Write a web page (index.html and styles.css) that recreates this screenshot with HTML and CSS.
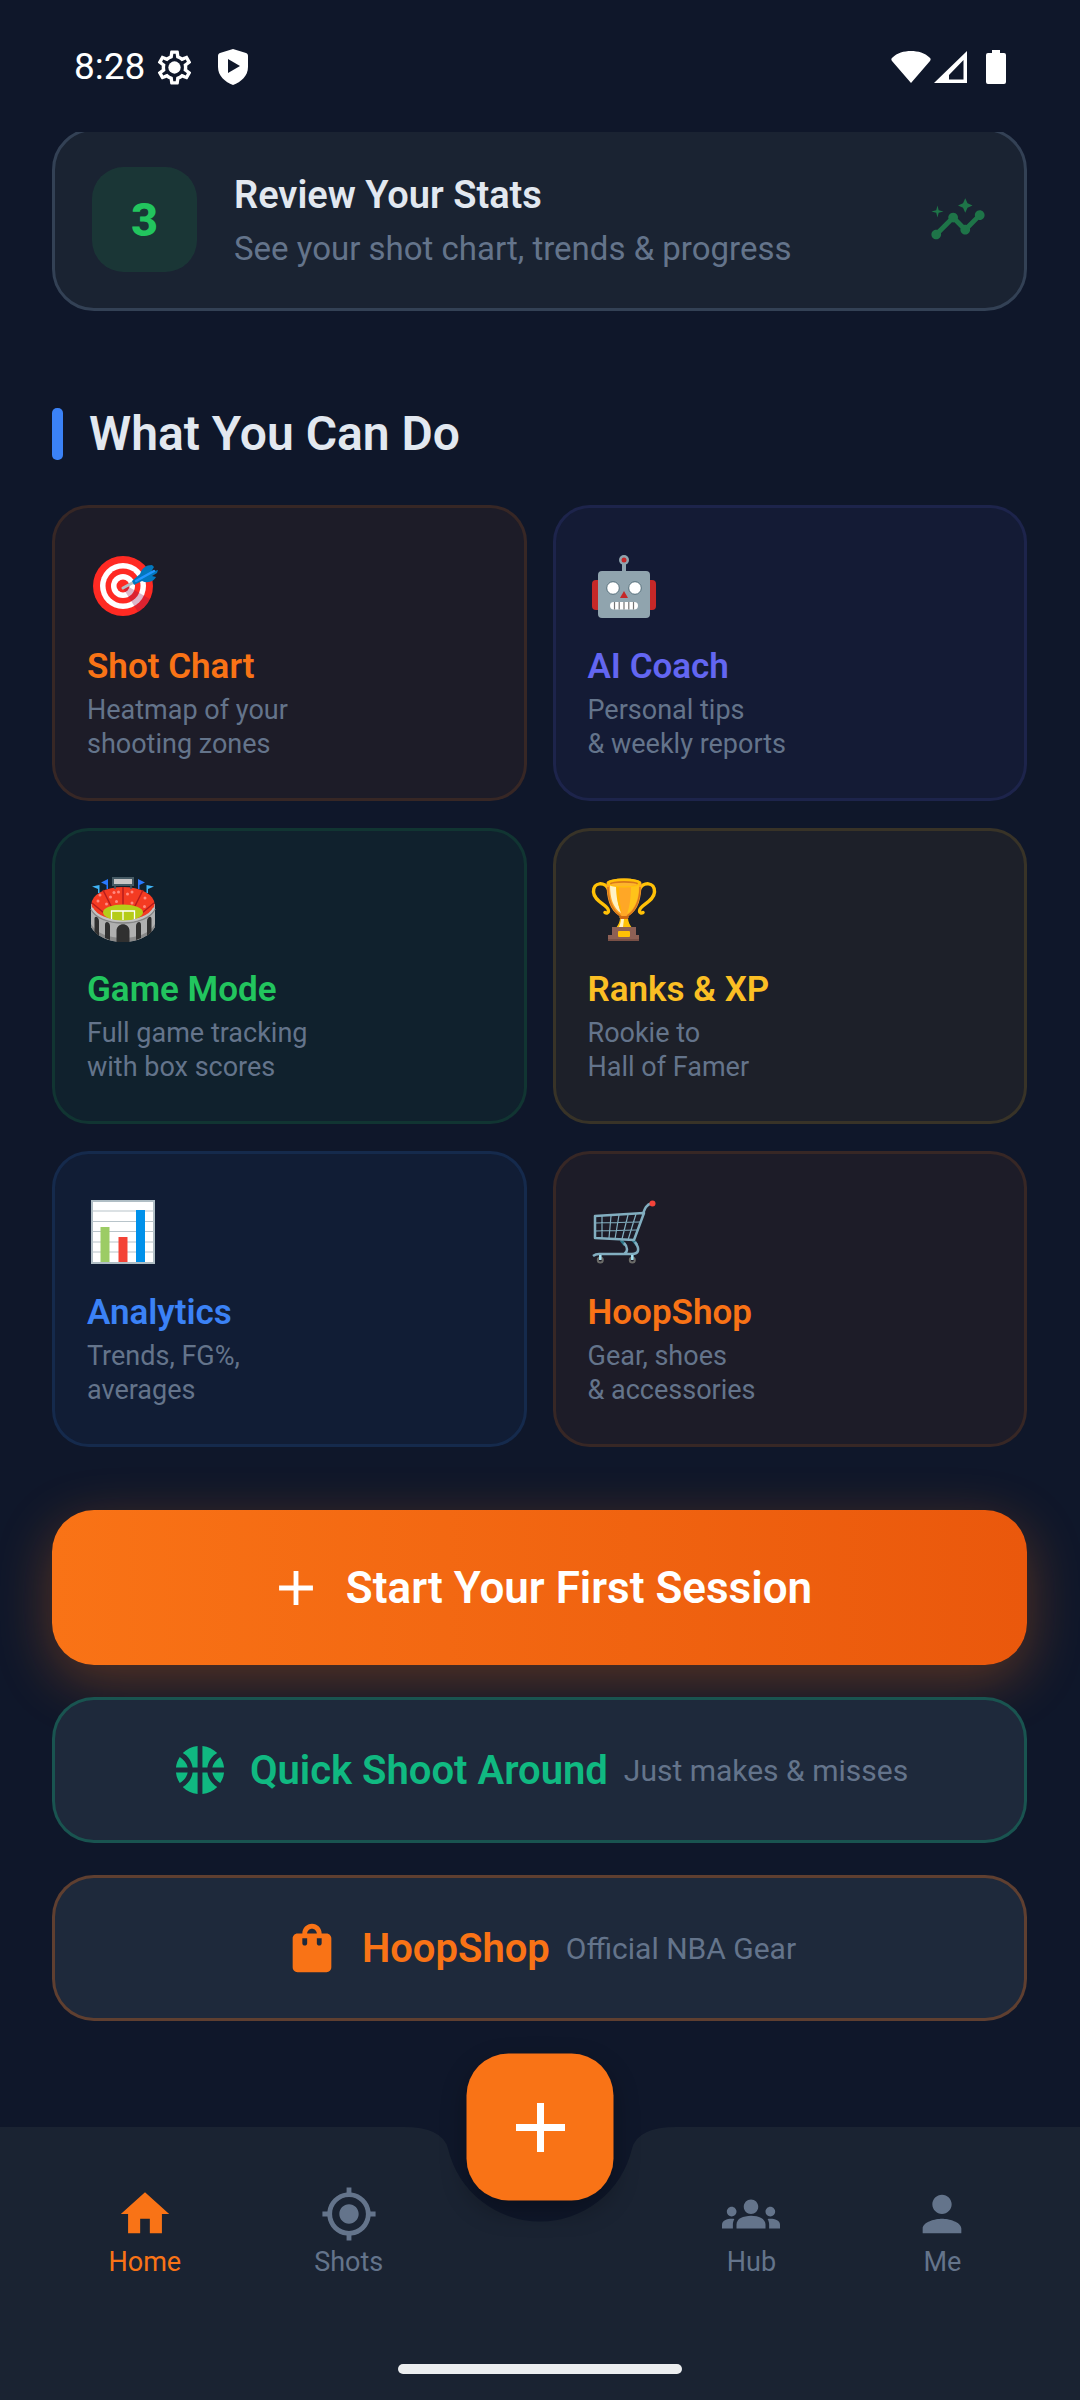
FILE: index.html
```html
<!DOCTYPE html>
<html lang="en">
<head>
  <meta charset="UTF-8">
  <meta name="viewport" content="width=device-width, initial-scale=1.0">
  <title>Home</title>
  <link rel="stylesheet" href="styles.css">
</head>
<body>
  <header class="status-bar">
    <div class="status-left">
      <span class="time">8:28</span>
      <svg class="status-gear" viewBox="0 0 24 24" fill="currentColor"><path d="M19.43 12.98c.04-.32.07-.64.07-.98 0-.34-.03-.66-.07-.98l2.11-1.65c.19-.15.24-.42.12-.64l-2-3.46c-.09-.16-.26-.25-.44-.25-.06 0-.12.01-.17.03l-2.49 1c-.52-.4-1.08-.73-1.69-.98l-.38-2.65C14.46 2.18 14.25 2 14 2h-4c-.25 0-.46.18-.49.42l-.38 2.65c-.61.25-1.17.59-1.69.98l-2.49-1c-.06-.02-.12-.03-.18-.03-.17 0-.34.09-.43.25l-2 3.46c-.13.22-.07.49.12.64l2.11 1.65c-.04.32-.07.65-.07.98 0 .33.03.66.07.98l-2.11 1.65c-.19.15-.24.42-.12.64l2 3.46c.09.16.26.25.44.25.06 0 .12-.01.17-.03l2.49-1c.52.4 1.08.73 1.69.98l.38 2.65c.03.24.24.42.49.42h4c.25 0 .46-.18.49-.42l.38-2.65c.61-.25 1.17-.59 1.69-.98l2.49 1c.06.02.12.03.18.03.17 0 .34-.09.43-.25l2-3.46c.12-.22.07-.49-.12-.64l-2.11-1.65zm-1.98-1.71c.04.31.05.52.05.73 0 .21-.02.43-.05.73l-.14 1.13.89.7 1.08.84-.7 1.21-1.27-.51-1.04-.42-.9.68c-.43.32-.84.56-1.25.73l-1.06.43-.16 1.13-.2 1.35h-1.4l-.19-1.35-.16-1.13-1.06-.43c-.43-.18-.83-.41-1.23-.71l-.91-.7-1.06.43-1.27.51-.7-1.21 1.08-.84.89-.7-.14-1.13c-.03-.31-.05-.54-.05-.74s.02-.43.05-.73l.14-1.13-.89-.7-1.08-.84.7-1.21 1.27.51 1.04.42.9-.68c.43-.32.84-.56 1.25-.73l1.06-.43.16-1.13.2-1.35h1.39l.19 1.35.16 1.13 1.06.43c.43.18.83.41 1.23.71l.91.7 1.06-.43 1.27-.51.7 1.21-1.07.85-.89.7.14 1.13z"/><circle cx="12" cy="12" r="3.6"/></svg>
      <svg class="status-shield" viewBox="0 0 30 36"><path fill="currentColor" d="M15 0 28 4c1.500.500 2 1.500 2 3v11c0 9-7 15-15 18C7 33 0 27 0 18V7c0-1.500.500-2.500 2-3z"/><path fill="#0f172a" d="M10 10v14l12-7z"/></svg>
    </div>
    <div class="status-right">
      <svg class="status-wifi" viewBox="0 0 40 32" fill="currentColor"><path d="M20 32 1 10C0 8.500.200 7.500 1.500 6.500 6 2 13 0 20 0s14 2 18.500 6.500c1.300 1 1.500 2 .500 3.500z"/></svg>
      <svg class="status-signal" viewBox="0 0 33 32"><path fill="currentColor" fill-rule="evenodd" d="M33 0v32H0zM29.500 9 15 24v4.500h14.500z"/></svg>
      <svg class="status-battery" viewBox="0 0 20 34" fill="currentColor"><path d="M6 0h8v3h4a2 2 0 0 1 2 2v27a2 2 0 0 1-2 2H2a2 2 0 0 1-2-2V5a2 2 0 0 1 2-2h4z"/></svg>
    </div>
  </header>

  <main class="content">
    <section class="step-card">
      <div class="step-number">3</div>
      <div class="step-text">
        <h3>Review Your Stats</h3>
        <p>See your shot chart, trends &amp; progress</p>
      </div>
      <svg class="step-icon" viewBox="0 0 24 24" fill="currentColor"><path d="M21 8c-1.450 0-2.260 1.440-1.930 2.510l-3.550 3.560c-.3-.09-.74-.09-1.040 0l-2.550-2.550C12.270 10.450 11.460 9 10 9c-1.450 0-2.270 1.440-1.930 2.520l-4.560 4.550C2.440 15.740 1 16.550 1 18c0 1.100.9 2 2 2 1.450 0 2.260-1.440 1.930-2.510l4.550-4.560c.3.09.74.09 1.040 0l2.550 2.550C12.730 16.550 13.540 18 15 18c1.450 0 2.270-1.440 1.930-2.520l3.560-3.550C21.560 12.260 23 11.450 23 10c0-1.100-.9-2-2-2z"/><path d="m15 9 .94-2.070L18 6l-2.060-.93L15 3l-.92 2.070L12 6l2.080.93zM3.500 11 4 9l2-.5L4 8l-.5-2L3 8l-2 .5L3 9z"/></svg>
    </section>

    <h2 class="section-title">What You Can Do</h2>

    <div class="features">
      <a href="#" class="feature orange">
        <svg class="emoji" viewBox="0 0 74 74">
          <circle cx="36" cy="36" r="30" fill="#ff2a23"/>
          <circle cx="36" cy="36" r="23" fill="#fff"/>
          <circle cx="36" cy="36" r="17.500" fill="#ff2a23"/>
          <circle cx="36" cy="36" r="12" fill="#fff"/>
          <circle cx="36" cy="36" r="6.500" fill="#ff2a23"/>
          <path fill="#8a1050" opacity=".3" d="m36 38 4-2 23 13c-3 5-6 9-12 13z"/>
          <path stroke="#b0bec5" stroke-width="3" stroke-linecap="round" d="m36 38 11-6"/>
          <path fill="#0277bd" d="m45 31 8-7c2-6 6-9 12-9l2 2-3 5 7-2-1 3-5 3 4 1c-2 4-8 7-14 4l-8 4z"/>
          <path stroke="#2196ff" stroke-width="2.500" stroke-linecap="round" d="m49 31 18-10"/>
        </svg>
        <h3>Shot Chart</h3>
        <p>Heatmap of your<br>shooting zones</p>
      </a>

      <a href="#" class="feature indigo">
        <svg class="emoji" viewBox="0 0 74 74">
          <rect x="4" y="30" width="64" height="30" rx="4" fill="#c62828"/>
          <path stroke="#90a4ae" stroke-width="4" d="M36 12v12"/>
          <circle cx="36" cy="10" r="5" fill="#90a4ae"/>
          <circle cx="36" cy="10" r="2.500" fill="#c62828"/>
          <rect x="10" y="21" width="52" height="47" rx="4" fill="#90a4ae"/>
          <circle cx="25" cy="38" r="6.300" fill="#fff" stroke="#546e7a"/>
          <circle cx="47" cy="38" r="6.300" fill="#fff" stroke="#546e7a"/>
          <path fill="#c62828" d="m36 41 4 7h-8z"/>
          <rect x="22" y="52" width="28" height="7.500" rx="3.700" fill="#fff"/>
          <path stroke="#757575" stroke-width="1.200" d="M26.500 52v7.500m4.700-7.500v7.500m4.800-7.500v7.500m4.800-7.500v7.500m4.700-7.500v7.500"/>
        </svg>
        <h3>AI Coach</h3>
        <p>Personal tips<br>&amp; weekly reports</p>
      </a>

      <a href="#" class="feature green">
        <svg class="emoji" viewBox="0 0 74 74">
          <path fill="#b0b0b0" d="M4 31v23c5 9 18 15 32 15s27-6 32-15V31z"/>
          <path fill="#8a8a8a" d="M4 51v3c5 9 18 15 32 15s27-6 32-15v-3c-5 9-18 14-32 14S9 60 4 51z"/>
          <path fill="none" stroke="#858585" stroke-width="1.500" d="M4 36c4 9 17 14 32 14s28-5 32-14"/>
          <ellipse cx="36" cy="31" rx="31.500" ry="17" fill="#f43b22"/>
          <path fill="none" stroke="#c3c3c3" stroke-width="2" d="M5 35c4 8 16 13 31 13s27-5 31-13"/>
          <path stroke="#b71c1c" stroke-width="1.500" d="M36 14v18M16 17l8 16m32-16-8 16M5 30l12 10m50-10L55 40"/>
          <g fill="#ff8a80"><circle cx="27" cy="19.500" r="1.500"/><circle cx="31.500" cy="19" r="1.500"/><circle cx="23.500" cy="24" r="1.500"/><circle cx="29.500" cy="28.500" r="1.500"/><circle cx="13" cy="22" r="1.500"/><circle cx="11" cy="28" r="1.500"/><circle cx="19.500" cy="31" r="1.500"/><circle cx="40.500" cy="21" r="1.500"/><circle cx="45" cy="19" r="1.500"/><circle cx="45" cy="30" r="1.500"/><circle cx="58" cy="25" r="1.500"/><circle cx="57.500" cy="33.500" r="1.500"/></g>
          <ellipse cx="36" cy="39.500" rx="20" ry="8" fill="#b5cc18"/>
          <path fill="none" stroke="#fff" stroke-width="1.300" d="M24.500 46v-8h23v8M36 38v9"/>
          <path fill="#303030" d="M29.500 69V58c0-9 13-9 13 0v11zM18 65V52c0-5 5-3 5 1v14zM7.500 59V46c0-4 4.500-2 4.500 2v15zM54 65V52c0-5-5-3-5 1v14zM64.500 59V46c0-4-4.500-2-4.500 2v15z"/>
          <path stroke="#455a64" stroke-width="1.500" d="M28 12v4m16-4v4"/>
          <rect x="26" y="5" width="20" height="7" fill="#c5c5c5" stroke="#455a64" stroke-width="2"/>
          <path fill="#2979ff" d="M21 6v10h-1.500v-4L14 9.500zM51 6v10h1.500v-4L58 9.500z"/>
          <path fill="#40b4f5" d="M12.500 12v8H11v-4l-6-2.500zM59.500 12v8H61v-4l6-2.500z"/>
        </svg>
        <h3>Game Mode</h3>
        <p>Full game tracking<br>with box scores</p>
      </a>

      <a href="#" class="feature yellow">
        <svg class="emoji" viewBox="0 0 74 74">
          <path fill="none" stroke="#ffc107" stroke-width="3.500" stroke-linecap="round" d="M21 17C17 8 5 9 5.500 19 6 29 21 32 20.500 38c0 2-2 2.500-3.500 1.500M51 17c4-9 16-8 15.500 2C66 29 51 32 51.500 38c0 2 2 2.500 3.500 1.500"/>
          <path fill="#ffa726" d="M18.500 10c0-6 35-6 35 0 0 15-3 27-13 33v2h-9v-2c-10-6-13-18-13-33z"/>
          <path fill="#ffc31a" d="M43 11h8c0 14-3 24-12 30 3-8 4-18 4-30z"/>
          <path fill="#fff3c4" d="M22 12h7c0 12 1 21 4 28-8-5-11-15-11-28z"/>
          <path fill="#ffb300" d="M28 12h3c0 12 1 21 3 28-4-6-6-16-6-28z"/>
          <path fill="none" stroke="#d9781b" stroke-width="1.500" d="M20 14c0 12 4 24 13 29m19-29c0 12-4 24-13 29"/>
          <ellipse cx="36" cy="10" rx="17" ry="4.500" fill="#ffc107"/>
          <ellipse cx="36" cy="10.500" rx="14" ry="2.500" fill="#d9781b"/>
          <ellipse cx="36" cy="11.500" rx="13" ry="1.800" fill="#ffb52a"/>
          <path fill="#ffc107" d="M32 45h8c0 4 2 7 4 10H28c2-3 4-6 4-10z"/>
          <path fill="#fff3c4" d="M33 46h3l-1 8h-4c1-3 2-5 2-8z"/>
          <path fill="#d06a12" d="M32 43h8v3h-8z"/>
          <path fill="#8d6055" d="M24 54h24v8h3v6H20v-6h4z"/>
          <path fill="#795046" d="M20 66h31v2H20z"/>
          <rect x="30" y="58" width="12" height="6" rx="1" fill="#ffc107"/>
        </svg>
        <h3>Ranks &amp; XP</h3>
        <p>Rookie to<br>Hall of Famer</p>
      </a>

      <a href="#" class="feature blue">
        <svg class="emoji" viewBox="0 0 74 74">
          <rect x="5" y="5" width="62" height="62" fill="#fff" stroke="#b0bec5" stroke-width="2"/>
          <path stroke="#b8c4ca" stroke-width="1.200" d="M5 15h62M5 25.500h62M5 35.500h62M5 46h62M5 56h62"/>
          <path fill="#9ccc65" d="M13.500 31h9v35h-9z"/>
          <path fill="#f44336" d="M31.500 41h9v25h-9z"/>
          <path fill="#0091ea" d="M49 14h9v52h-9z"/>
        </svg>
        <h3>Analytics</h3>
        <p>Trends, FG%,<br>averages</p>
      </a>

      <a href="#" class="feature orange">
        <svg class="emoji" viewBox="0 0 74 74" fill="none" stroke="#82aec0">
          <path stroke="#2f7889" stroke-width="3" d="m33 44 4 5m8-5 4 5"/>
          <path stroke-width="1.200" d="M14 20v22m9-22-2 22m10-23-4 24m13-24-6 24m14-25-8 26M7 27l45-1M7 35l42-1"/>
          <path stroke-width="2.500" stroke-linejoin="round" d="M7 20v22l39 2 10-27z"/>
          <path stroke-width="2.500" stroke-linecap="round" d="M55 18c2-6 3-9 9-11"/>
          <path stroke-width="2.500" d="M36 47c4 4 4 9 0 11m11-12c5 7 4 12-3 12H11c-3 0-4 .500-6 2"/>
          <circle cx="64.500" cy="7.500" r="3" fill="#f4433a" stroke="none"/>
          <circle cx="12.300" cy="64" r="2.500" stroke="#6b6b68" stroke-width="2"/>
          <circle cx="44.300" cy="64" r="2.500" stroke="#6b6b68" stroke-width="2"/>
          <path stroke="#a5e3f5" stroke-width="2.500" d="M12.300 59v5m32-5v5"/>
        </svg>
        <h3>HoopShop</h3>
        <p>Gear, shoes<br>&amp; accessories</p>
      </a>
    </div>

    <div class="actions">
      <button class="btn btn-start">
        <svg class="btn-icon" viewBox="0 0 24 24" fill="currentColor"><path d="M19 13h-6v6h-2v-6H5v-2h6V5h2v6h6z"/></svg>
        <span class="btn-label">Start Your First Session</span>
      </button>
      <button class="btn btn-quick">
        <svg class="btn-icon" viewBox="0 0 24 24" fill="currentColor"><path d="M17.090 11h4.860c-.160-1.610-.710-3.110-1.570-4.400-1.710 1.070-2.950 2.570-3.290 4.400zM6.910 11c-.340-1.830-1.580-3.330-3.290-4.400C2.760 7.890 2.210 9.390 2.050 11zM15.070 11c.320-2.590 1.880-4.790 4.060-6-1.600-1.630-3.740-2.710-6.130-2.950V11zM8.930 11H11V2.050C8.610 2.290 6.470 3.370 4.870 5c2.180 1.210 3.740 3.410 4.060 6zM15.070 13H13v8.950c2.390-.240 4.530-1.320 6.130-2.950-2.180-1.210-3.740-3.410-4.060-6zM3.620 17.400c1.700-1.070 2.950-2.570 3.290-4.400H2.050c.160 1.610.710 3.110 1.570 4.400zM17.090 13c.340 1.830 1.590 3.330 3.290 4.400.860-1.290 1.410-2.790 1.570-4.400zM8.930 13c-.320 2.590-1.880 4.790-4.060 6 1.600 1.630 3.740 2.710 6.130 2.950V13z"/></svg>
        <span class="btn-label">Quick Shoot Around</span>
        <span class="btn-note">Just makes &amp; misses</span>
      </button>
      <button class="btn btn-shop">
        <svg class="btn-icon" viewBox="0 0 24 24" fill="currentColor"><path d="M18 6h-2c0-2.210-1.790-4-4-4S8 3.790 8 6H6c-1.100 0-2 .9-2 2v12c0 1.100.9 2 2 2h12c1.100 0 2-.9 2-2V8c0-1.100-.9-2-2-2zm-8 4c0 .550-.450 1-1 1s-1-.450-1-1V8h2v2zm2-6c1.100 0 2 .9 2 2h-4c0-1.100.9-2 2-2zm4 6c0 .550-.450 1-1 1s-1-.450-1-1V8h2v2z"/></svg>
        <span class="btn-label">HoopShop</span>
        <span class="btn-note">Official NBA Gear</span>
      </button>
    </div>
  </main>

  <nav class="bottom-nav">
    <a href="#" class="nav-item active">
      <svg viewBox="0 0 24 24" fill="currentColor"><path d="M10 20v-6h4v6h5v-8h3L12 3 2 12h3v8z"/></svg>
      <span>Home</span>
    </a>
    <a href="#" class="nav-item">
      <svg viewBox="0 0 24 24" fill="currentColor"><path d="M12 8c-2.210 0-4 1.790-4 4s1.790 4 4 4 4-1.790 4-4-1.790-4-4-4zm8.940 3c-.460-4.170-3.770-7.480-7.940-7.940V1h-2v2.060C6.830 3.520 3.520 6.830 3.060 11H1v2h2.060c.460 4.170 3.770 7.480 7.940 7.940V23h2v-2.060c4.170-.460 7.480-3.770 7.940-7.940H23v-2h-2.060zM12 19c-3.870 0-7-3.130-7-7s3.130-7 7-7 7 3.130 7 7-3.130 7-7 7z"/></svg>
      <span>Shots</span>
    </a>
    <div class="nav-gap"></div>
    <a href="#" class="nav-item">
      <svg viewBox="0 0 24 24" fill="currentColor"><path d="M12 12.750c1.630 0 3.070.390 4.240.9 1.080.480 1.760 1.560 1.760 2.730V18H6v-1.610c0-1.180.680-2.260 1.760-2.730 1.170-.520 2.610-.910 4.240-.910zM4 13c1.100 0 2-.9 2-2s-.9-2-2-2-2 .9-2 2 .9 2 2 2zm1.130 1.100C4.760 14.040 4.390 14 4 14c-.990 0-1.930.210-2.780.580C.480 14.900 0 15.620 0 16.430V18h4.500v-1.610c0-.830.230-1.610.630-2.290zM20 13c1.100 0 2-.9 2-2s-.9-2-2-2-2 .9-2 2 .9 2 2 2zm4 3.430c0-.810-.480-1.530-1.220-1.850C21.930 14.210 20.990 14 20 14c-.390 0-.760.040-1.130.1.400.680.630 1.460.630 2.290V18H24v-1.570zM12 6c1.660 0 3 1.340 3 3s-1.340 3-3 3-3-1.340-3-3 1.340-3 3-3z"/></svg>
      <span>Hub</span>
    </a>
    <a href="#" class="nav-item">
      <svg viewBox="0 0 24 24" fill="currentColor"><path d="M12 12c2.210 0 4-1.790 4-4s-1.790-4-4-4-4 1.790-4 4 1.790 4 4 4zm0 2c-2.670 0-8 1.340-8 4v2h16v-2c0-2.660-5.330-4-8-4z"/></svg>
      <span>Me</span>
    </a>

    <!-- cut-out in the bar around the floating button -->
    <svg class="notch" viewBox="0 0 273 96"><path fill="#0f172a" d="M0 0Q39 0 44.500 21.600A94.500 94.500 0 0 0 228.500 21.600Q234 0 273 0z"/></svg>
    <button class="fab" aria-label="Add">
      <svg viewBox="0 0 24 24" fill="currentColor"><path d="M19 13h-6v6h-2v-6H5v-2h6V5h2v6h6z"/></svg>
    </button>
    <div class="home-indicator"></div>
  </nav>
</body>
</html>
```
FILE: styles.css
```css
* {
  box-sizing: border-box;
  margin: 0;
  padding: 0;
}

body {
  min-height: 100vh;
  display: flex;
  flex-direction: column;
  background-color: #0f172a;
  color: #e2e8f0;
  font-family: Roboto, sans-serif;
}

a {
  color: inherit;
  text-decoration: none;
}

svg {
  display: block;
  flex-shrink: 0;
}

/* Status bar */
.status-bar {
  height: 132px;
  padding: 2px 74px 0;
  display: flex;
  align-items: center;
  justify-content: space-between;
  color: #fff;
}

.status-left,
.status-right {
  display: flex;
  align-items: center;
}

.time {
  font-size: 37px;
  line-height: 44px;
}

.status-gear {
  width: 41px;
  margin-left: 9px;
}

.status-shield {
  width: 30px;
  margin-left: 23px;
}

.status-wifi {
  width: 40px;
}

.status-signal {
  width: 33px;
  margin: 0 19px 0 3px;
}

.status-battery {
  width: 20px;
}

/* Content */
.content {
  flex: 1;
  padding: 0 53px 40px 52px;
  overflow: hidden;
}

.step-card {
  height: 183px;
  margin-top: -4px;
  padding: 0 37px;
  display: flex;
  align-items: center;
  gap: 37px;
  background-color: #1a2332;
  border: 3px solid #334155;
  border-radius: 42px;
}

.step-number {
  width: 105px;
  height: 105px;
  display: flex;
  align-items: center;
  justify-content: center;
  border-radius: 32px;
  background-color: rgba(34, 197, 94, 0.12);
  color: #22c55e;
  font-size: 47px;
  font-weight: 800;
}

.step-text {
  flex: 1;
}

.step-text h3 {
  font-size: 38px;
  font-weight: 600;
  line-height: 46px;
}

.step-text p {
  margin-top: 12px;
  font-size: 33px;
  line-height: 38px;
  color: #64748b;
}

.step-icon {
  width: 58px;
  color: #22c55e;
  opacity: 0.5;
}

.section-title {
  margin: 97px 0 45px;
  display: flex;
  align-items: center;
  gap: 26px;
  font-size: 48px;
  font-weight: 600;
  line-height: 52px;
}

.section-title::before {
  content: "";
  width: 11px;
  height: 52px;
  border-radius: 5px;
  background-color: #3b82f6;
}

/* Feature cards */
.features {
  display: grid;
  grid-template-columns: 1fr 1fr;
  gap: 27px 26px;
}

.feature {
  padding: 42px 32px 37px;
  border: 3px solid;
  border-radius: 37px;
}

.feature h3 {
  margin-top: 23px;
  font-size: 35px;
  font-weight: 600;
  line-height: 40px;
}

.feature p {
  margin-top: 6px;
  font-size: 27px;
  line-height: 34px;
  color: #64748b;
}

.emoji {
  width: 74px;
}

.orange {
  background-color: rgba(249, 115, 22, 0.06);
  border-color: rgba(249, 115, 22, 0.12);
}

.orange h3 {
  color: #f97316;
}

.indigo {
  background-color: rgba(99, 102, 241, 0.06);
  border-color: rgba(99, 102, 241, 0.12);
}

.indigo h3 {
  color: #6366f1;
}

.green {
  background-color: rgba(34, 197, 94, 0.06);
  border-color: rgba(34, 197, 94, 0.12);
}

.green h3 {
  color: #22c55e;
}

.yellow {
  background-color: rgba(251, 191, 36, 0.06);
  border-color: rgba(251, 191, 36, 0.12);
}

.yellow h3 {
  color: #fbbf24;
}

.blue {
  background-color: rgba(59, 130, 246, 0.06);
  border-color: rgba(59, 130, 246, 0.12);
}

.blue h3 {
  color: #3b82f6;
}

/* Action buttons */
.actions {
  margin-top: 63px;
  display: flex;
  flex-direction: column;
  gap: 32px;
}

.btn {
  height: 146px;
  display: flex;
  align-items: center;
  justify-content: center;
  border: 3px solid;
  border-radius: 42px;
  background-color: #1e293b;
  font-family: inherit;
  font-size: 40px;
  cursor: pointer;
}

.btn-icon {
  width: 58px;
  margin-right: 21px;
}

.btn-label {
  font-weight: 600;
}

.btn-note {
  margin-left: 16px;
  font-size: 30px;
  color: #64748b;
}

.btn-start {
  height: 155px;
  border: none;
  background: linear-gradient(90deg, #f97316, #ea580c);
  box-shadow: 0 16px 56px rgba(249, 115, 22, 0.32);
  color: #fff;
  font-size: 44px;
}

.btn-quick {
  position: relative;
  border-color: rgba(16, 185, 129, 0.3);
  color: #10b981;
}

.btn-shop {
  border-color: rgba(249, 115, 22, 0.3);
  color: #f97316;
}

/* Bottom navigation */
.bottom-nav {
  position: relative;
  height: 273px;
  padding: 58px 42px 0;
  display: flex;
  align-items: flex-start;
  justify-content: space-around;
  background-color: #1a2332;
}

.nav-item {
  display: flex;
  flex-direction: column;
  align-items: center;
  gap: 2px;
  color: #64748b;
  font-size: 27px;
  line-height: 34px;
}

.nav-item svg {
  width: 58px;
}

.nav-item.active {
  color: #f97316;
}

.nav-gap {
  width: 73px;
}

.notch {
  position: absolute;
  top: 0;
  left: 50%;
  width: 273px;
  transform: translateX(-50%);
}

.fab {
  position: absolute;
  top: 0;
  left: 50%;
  width: 147px;
  height: 147px;
  display: flex;
  align-items: center;
  justify-content: center;
  transform: translate(-50%, -50%);
  border: none;
  border-radius: 42px;
  background-color: #f97316;
  box-shadow: 0 10px 26px rgba(0, 0, 0, 0.3);
  color: #fff;
  cursor: pointer;
}

.fab svg {
  width: 84px;
}

.home-indicator {
  position: absolute;
  bottom: 26px;
  left: 50%;
  width: 284px;
  height: 10px;
  transform: translateX(-50%);
  border-radius: 5px;
  background-color: #eceef0;
}
```
